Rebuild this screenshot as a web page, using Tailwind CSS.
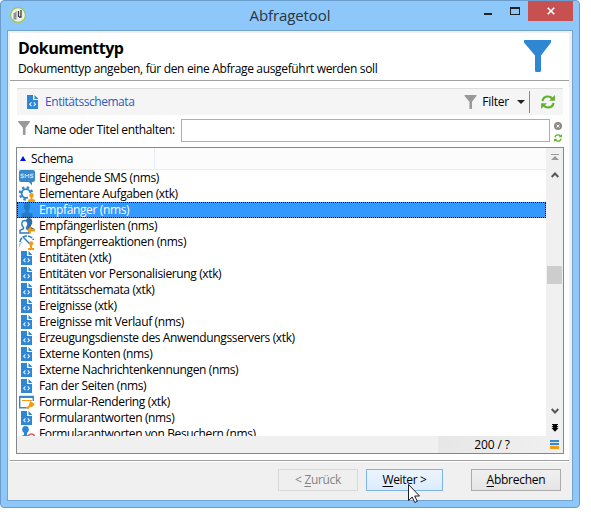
<!DOCTYPE html>
<html lang="de">
<head>
<meta charset="utf-8">
<title>Abfragetool</title>
<script src="https://cdn.jsdelivr.net/npm/@tailwindcss/browser@4"></script>
</head>
<body class="bg-white w-[591px] h-[514px] overflow-hidden font-['Open_Sans','Noto_Sans',sans-serif] text-[12px] leading-4 tracking-[-0.34px] text-black">
<svg class="hidden">
  <symbol id="doc" viewBox="0 0 16 16"><path fill="#2f86d2" d="M2 1h6v5h5v9H2z"/><path fill="#2f86d2" d="M9.500 1L13 4.500V5H9.500z"/><path d="M6.500 8.300L4.700 10.200l1.800 1.900M8.700 8.300l1.800 1.900-1.800 1.900" fill="none" stroke="#e4f1fc" stroke-width="1.100"/></symbol>
  <symbol id="funnel" viewBox="0 0 27 32"><path d="M0 0H27V2.500L17 15.500V30.500Q17 32 15.500 32H12.500Q11 32 11 30.500V15.500L0 2.500Z" fill="currentColor"/></symbol>
  <symbol id="refresh" viewBox="0 0 14 14"><path d="M1.500 6C2 3 4.200 1.500 7 1.500c2 0 3.300.8 4.200 2M12.500 8c-.5 3-2.700 4.500-5.500 4.500-2 0-3.300-.8-4.200-2" fill="none" stroke="#62b22f" stroke-width="2.200"/><path d="M13.900 0v5.700H8.200zM.1 14V8.300h5.700z" fill="#62b22f"/></symbol>
  <symbol id="sms" viewBox="0 0 16 16"><path d="M2 0h12q2 0 2 2v8q0 2-2 2h-1v3.500l-3-3.500H2q-2 0-2-2V2q0-2 2-2z" fill="#3789ce"/><path d="M4.800 4.200H2v1.700h2.300v1.700H1.600M6.200 8V4.200l1.800 2 1.800-2V8M14.400 4.200h-2.800v1.700h2.300v1.700h-2.700" fill="none" stroke="#dcecfa" stroke-width=".9"/></symbol>
  <symbol id="gear" viewBox="0 0 16 16"><circle cx="7" cy="7.500" r="4.300" fill="none" stroke="#3182cb" stroke-width="1.800"/><circle cx="7" cy="7.500" r="6" fill="none" stroke="#3182cb" stroke-width="2.400" stroke-dasharray="2.356"/><path d="M9 7h7v9H9z" fill="#fff"/><circle cx="12.500" cy="9.300" r="2.200" fill="#f39b13"/><path d="M11.500 11h2v2l2.500.8V16H9v-2.200l2.500-.8z" fill="#f39b13"/></symbol>
  <symbol id="person" viewBox="0 0 16 16"><ellipse cx="8" cy="4.500" rx="3.200" ry="4" fill="#217bc4"/><path d="M6.500 7h3v3.200l4 1.600V16h-11v-4.200l4-1.600z" fill="#217bc4"/></symbol>
  <symbol id="list" viewBox="0 0 16 16"><ellipse cx="10" cy="4" rx="3.300" ry="4" fill="#2d6da8"/><path d="M9 7h3v2l3 1.500V13H7z" fill="#2d6da8"/><path d="M6 2.500c-4 0-4 5-1.500 7v1.200L1 12.500V15h9v-2.500L7.500 10.700V9.500C10 7 9 2.500 6 2.500z" fill="#fff" stroke="#2f79ba" stroke-width="1.400"/><path d="M8 12l4-4v2.700h4v2.800h-4V16z" fill="#f39b13"/></symbol>
  <symbol id="gauge" viewBox="0 0 16 16"><path d="M1 8a7 6.500 0 0 1 13.500-2" fill="none" stroke="#2f80c4" stroke-width="1.600" stroke-dasharray="4.500 1"/><path d="M4 3l7 7" stroke="#2f80c4" stroke-width="1.500"/><path d="M0 13c0-2 1.500-4 3-5" fill="none" stroke="#a8cce8" stroke-width="1.500"/><circle cx="12" cy="9.500" r="2.200" fill="#f39b13"/><path d="M11 11h2v3h2v2H9v-2h2z" fill="#f39b13"/></symbol>
  <symbol id="form" viewBox="0 0 16 16"><path d="M.7 2.500h13.600V7M.7 2.500v11.300h7" fill="none" stroke="#3687cb" stroke-width="1.400"/><path d="M0 2h15v2H0z" fill="#3687cb"/><path d="M3 6.500h10" stroke="#f39b13"/><path d="M11 7l5 3-3 3H11l-2 2.500-1.800-1.500L10 11z" fill="#f39b13"/></symbol>
  <symbol id="visitor" viewBox="0 0 16 16"><ellipse cx="6.500" cy="3.500" rx="3.300" ry="3.500" fill="#2f86d2"/><path d="M5 6h3v3l3 1.500V16H1v-5.500L5 9z" fill="#2f86d2"/><circle cx="12.500" cy="11" r="3" fill="#fff" stroke="#e45b50" stroke-width="1.500"/></symbol>
</svg>

<div class="relative w-[580px] h-[508px] rounded-[4px] bg-[#8ec8fa] border border-[#6a9dcc] px-[6px] pb-[6px] flex flex-col">
  <header class="relative h-[29px] shrink-0">
    <svg class="absolute left-[3px] top-[6px] size-4" viewBox="0 0 16 16"><circle cx="8" cy="8" r="7.400" fill="#efefec" stroke="#9cc653" stroke-width="1.200"/><path d="M3.500 6.500l3-2v8H3.500z" fill="#8c9190"/><path d="M6.500 4v7" stroke="#bbb"/><path d="M8.500 4v6M11 3v7H9" stroke="#393d3d" stroke-width="1.300" fill="none"/></svg>
    <h1 class="absolute inset-x-0 top-[4px] text-center text-[15px] leading-5 tracking-[-0.1px] text-[#28343f]">Abfragetool</h1>
    <div class="absolute right-0 top-0 flex h-5">
      <span class="w-8 relative"><i class="absolute left-[2px] top-[12px] w-2 h-[2px] bg-[#222]"></i></span>
      <span class="w-[14px] relative"><i class="absolute left-[-4px] top-[6px] w-[10px] h-2 border border-t-2 border-[#222]"></i></span>
      <span class="w-[45px] h-5 bg-[#c75050] flex items-center justify-center"><svg class="size-[8px]" viewBox="0 0 8 8"><path d="M.7.7l6.600 6.600M7.300.7L.7 7.300" stroke="#fff" stroke-width="1.600"/></svg></span>
    </div>
  </header>

  <main class="flex-1 bg-[#f0f0f0] border border-[#71a3cf] pl-[2px] pr-[3px] pt-[2px] flex flex-col min-h-0">
    <section class="h-[48px] shrink-0 bg-white border-b border-[#a0a0a0] pl-2 pr-[18px] flex justify-between">
      <div class="pt-[5px]">
        <h2 class="text-[16px] leading-5 font-bold tracking-[-0.5px]">Dokumenttyp</h2>
        <p class="mt-[3px]">Dokumenttyp angeben, für den eine Abfrage ausgeführt werden soll</p>
      </div>
      <svg class="w-[27px] h-8 mt-[7px] text-[#2f86d2]"><use href="#funnel"/></svg>
    </section>

    <section class="h-[380px] shrink-0 bg-white border-b border-[#a0a0a0] pl-[6px] pr-[5px] pt-[7px] pb-[6px] flex flex-col">
      <div class="h-[27px] ml-px mr-px shrink-0 bg-[#f5f5f5] border-t border-[#dcdcdc] flex items-center pl-[8px] pr-[8px]">
        <svg class="size-4"><use href="#doc"/></svg>
        <span class="ml-[4px] tracking-[-0.45px] text-[#2a5cc4]">Entitätsschemata</span>
        <svg class="ml-auto w-[13px] h-[14px] text-[#999]"><use href="#funnel"/></svg>
        <span class="ml-[5px] tracking-[-0.25px]">Filter</span>
        <i class="ml-[8px] border-x-[4px] border-t-[4px] border-x-transparent border-t-[#222]"></i>
        <i class="ml-[4px] w-px h-[22px] bg-[#888]"></i>
        <svg class="ml-[11px] size-[14px]"><use href="#refresh"/></svg>
      </div>

      <div class="h-[28px] mt-[4px] shrink-0 flex items-start pl-[2px]">
        <svg class="w-[12px] h-[14px] mt-[2px] text-[#999]"><use href="#funnel"/></svg>
        <label class="ml-[4px] w-[147px] mt-[3px]">Name oder Titel enthalten:</label>
        <span class="w-[369px] h-[23px] border border-[#abadb3] bg-white"></span>
        <span class="ml-[4px] mt-[3px] flex flex-col gap-[4px]">
          <svg class="size-2" viewBox="0 0 8 8"><circle cx="4" cy="4" r="4" fill="#8e8984"/><path d="M2.500 2.500l3 3M5.500 2.500l-3 3" stroke="#fff"/></svg>
          <svg class="size-2"><use href="#refresh"/></svg>
        </span>
      </div>

      <div class="h-[307px] shrink-0 border border-[#828790] flex flex-col">
        <div class="h-[288px] flex shrink-0">
          <div class="flex-1 min-w-0 flex flex-col">
            <div class="h-[22px] shrink-0 bg-[#fcfcfc] border-b border-[#e4edf9] flex">
              <div class="w-[138px] border-r border-[#e4edf9] flex items-center pl-[3px]"><i class="border-x-[3px] border-b-[5px] border-x-transparent border-b-[#0010e8]"></i><span class="ml-[5px] mt-px">Schema</span></div>
            </div>
            <div id="rows" class="flex-1 min-h-0 overflow-hidden"></div>
          </div>
          <div class="w-[17px] flex flex-col items-center bg-[#f0f0f0]">
            <svg class="mt-[6px] w-[8px] h-[7px]" viewBox="0 0 8 7"><path d="M0 .5h8" stroke="#999"/><path d="M4 2l4 4H0z" fill="#999"/></svg>
            <svg class="mt-[11px] w-[8px] h-[6px]" viewBox="0 0 8 6"><path d="M.7 5L4 1.500 7.300 5" fill="none" stroke="#555" stroke-width="1.900"/></svg>
            <i class="mt-[88px] w-[15px] h-[18px] bg-[#cdcdcd]"></i>
            <svg class="mt-[124px] w-[8px] h-[6px]" viewBox="0 0 8 6"><path d="M.7 1L4 4.500 7.300 1" fill="none" stroke="#555" stroke-width="1.900"/></svg>
            <svg class="mt-[10px] w-[8px] h-[8px]" viewBox="0 0 8 8"><path d="M1 0h6v1H6v1h1.500L4 5.500.5 2H2V1H1z" fill="#000"/><path d="M.5 4h7L4 7.800z" fill="#000"/></svg>
          </div>
        </div>
        <div class="flex-1 bg-[#f0f0f0] flex justify-end">
          <div class="w-[125px] bg-linear-to-r from-[#e7e7e7] to-[#f0f0f0] flex items-center">
            <span class="w-[108px] text-center tracking-[-0.1px]">200 / ?</span>
            <span class="ml-[4px] w-[9px] h-[9px] flex flex-col"><i class="h-[2px] bg-[#3787cd]"></i><i class="h-px bg-[#d4e7f5]"></i><i class="h-[2px] bg-[#3787cd]"></i><i class="h-px bg-[#d4e7f5]"></i><i class="h-[3px] bg-[#f39b13]"></i></span>
          </div>
        </div>
      </div>
    </section>

    <footer class="border-t border-white flex pt-[7px] pl-[268px]">
      <button class="w-[80px] h-[22px] border border-[#d9d9d9] bg-[#efefef] text-[#838383]">&lt; <u class="underline-offset-2">Z</u>urück</button>
      <button class="ml-[8px] w-[77px] h-[22px] border border-[#7eb4ea] bg-linear-to-b from-[#ebf4fc] to-[#dcecfc]"><u class="underline-offset-2">W</u>eiter &gt;</button>
      <button class="ml-[28px] w-[90px] h-[22px] border border-[#acacac] bg-linear-to-b from-[#f0f0f0] to-[#e5e5e5] tracking-[-0.25px]"><u class="underline-offset-2">A</u>bbrechen</button>
    </footer>
  </main>
  <svg class="absolute left-[407px] top-[483px] w-[12px] h-[19px]" viewBox="0 0 12 19"><path d="M.5.500v16l3.700-3.500 2.600 5.500 2.500-1.100-2.600-5.400h4.800z" fill="#fff" stroke="#1c1c2b"/></svg>
</div>
<script>
  const rows = [
    ['sms', 'Eingehende SMS (nms)'],
    ['gear', 'Elementare Aufgaben (xtk)'],
    ['person', 'Empfänger (nms)', true],
    ['list', 'Empfängerlisten (nms)'],
    ['gauge', 'Empfängerreaktionen (nms)'],
    ['doc', 'Entitäten (xtk)'],
    ['doc', 'Entitäten vor Personalisierung (xtk)'],
    ['doc', 'Entitätsschemata (xtk)'],
    ['doc', 'Ereignisse (xtk)'],
    ['doc', 'Ereignisse mit Verlauf (nms)'],
    ['doc', 'Erzeugungsdienste des Anwendungsservers (xtk)'],
    ['doc', 'Externe Konten (nms)'],
    ['doc', 'Externe Nachrichtenkennungen (nms)'],
    ['doc', 'Fan der Seiten (nms)'],
    ['form', 'Formular-Rendering (xtk)'],
    ['doc', 'Formularantworten (nms)'],
    ['visitor', 'Formularantworten von Besuchern (nms)'],
  ];
  document.getElementById('rows').innerHTML = rows.map(([icon, label, selected]) => `
    <div class="h-4 flex items-center pl-[2px] tracking-[-0.37px] ${selected ? 'bg-[#3399ff] text-white outline-1 outline-dotted outline-black -outline-offset-1' : ''}">
      <svg class="size-4 shrink-0"><use href="#${icon}"/></svg><span class="ml-[4px] whitespace-nowrap">${label}</span>
    </div>`).join('');
</script>
</body>
</html>
